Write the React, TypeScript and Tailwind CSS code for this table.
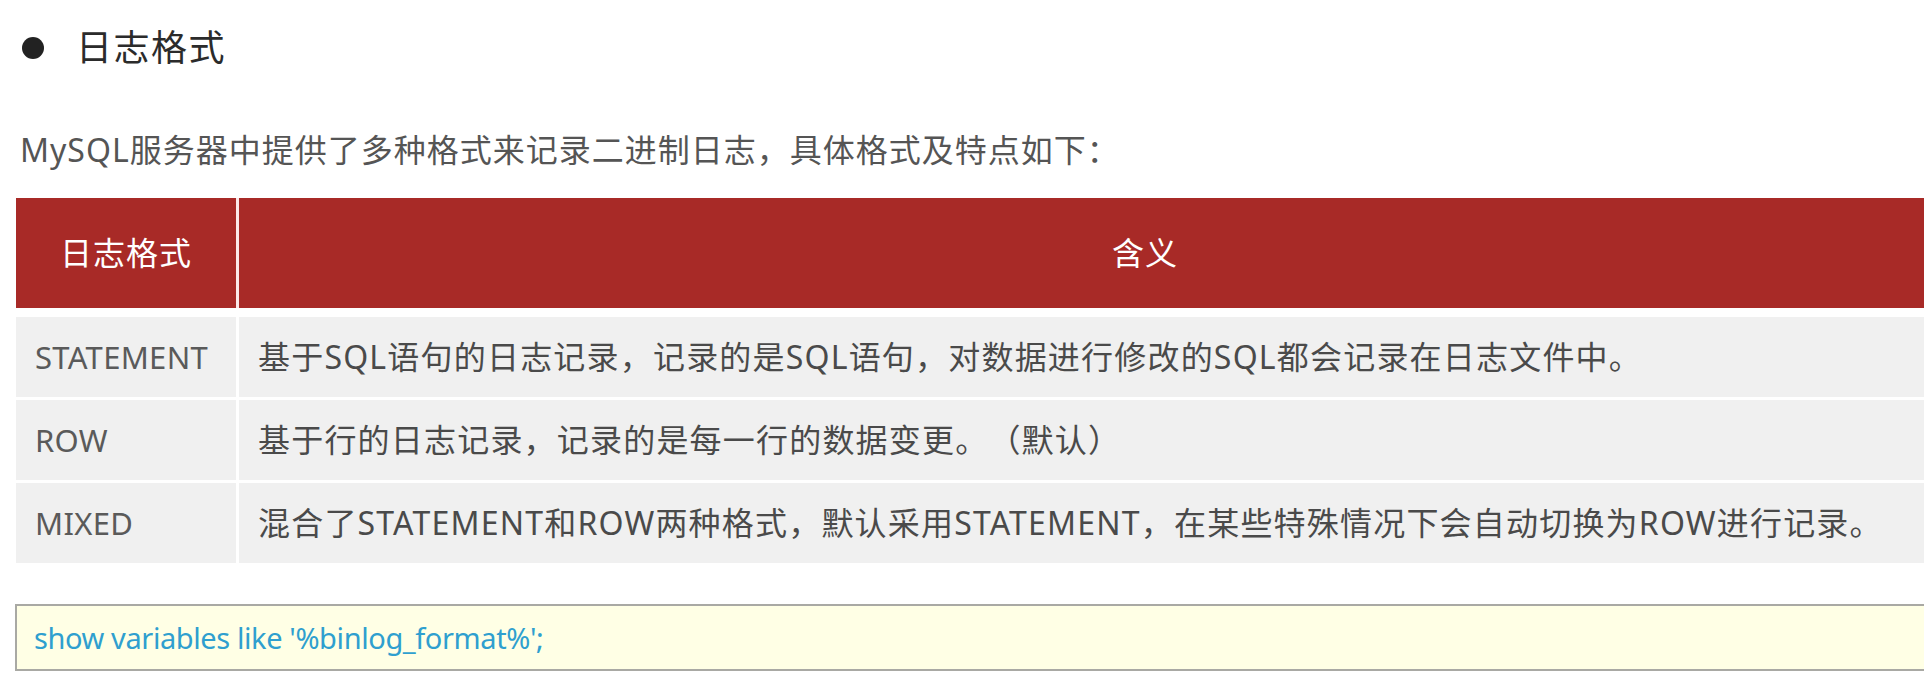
const rows = [
  {
    name: 'STATEMENT',
    desc: '基于SQL语句的日志记录，记录的是SQL语句，对数据进行修改的SQL都会记录在日志文件中。',
  },
  {
    name: 'ROW',
    desc: '基于行的日志记录，记录的是每一行的数据变更。（默认）',
  },
  {
    name: 'MIXED',
    desc: '混合了STATEMENT和ROW两种格式，默认采用STATEMENT，在某些特殊情况下会自动切换为ROW进行记录。',
  },
];

const font = "font-['Noto_Sans','Noto_Sans_CJK_SC',sans-serif]";

export default function App() {
  return (
    <div className={`w-[1924px] h-[689px] overflow-hidden bg-white [text-spacing-trim:space-all] ${font}`}>
      {/* Section title */}
      <div className="pt-[23px] pl-[22px] flex items-center h-[73px]">
        <span className="w-[22px] h-[22px] rounded-full bg-[#222]" />
        <h1 className="ml-[32px] text-[36px] leading-[50px] text-[#2b2b2b] tracking-[1.5px]">日志格式</h1>
      </div>

      <p className="mt-[54px] pl-[20px] text-[32px] leading-[46px] text-[#555] tracking-[1px]">
        MySQL服务器中提供了多种格式来记录二进制日志，具体格式及特点如下：
      </p>

      {/* Table */}
      <div className="mt-[25px] ml-[16px] w-[2035px]">
        <div className="grid grid-cols-[220px_1fr] gap-x-[3px] h-[110px] bg-[#fbe9e9]">
          <div className="bg-[#a82a27] flex items-center justify-center text-white text-[32px] tracking-[1px]">日志格式</div>
          <div className="bg-[#a82a27] flex items-center justify-center text-white text-[32px] tracking-[1px]">含义</div>
        </div>

        <div className="mt-[9px] flex flex-col gap-[3px]">
          {rows.map((row) => (
            <div key={row.name} className="grid grid-cols-[220px_1fr] gap-x-[3px] h-[80px]">
              <div className="bg-[#f0f0f0] flex items-center pl-[19px] text-[31px] text-[#5a5a5a] tracking-[0.3px]">{row.name}</div>
              <div className="bg-[#f0f0f0] flex items-center pl-[19px] text-[32px] text-[#4a4a4a] tracking-[1.2px]">{row.desc}</div>
            </div>
          ))}
        </div>
      </div>

      {/* Code block */}
      <div className="mt-[41px] ml-[15px] w-[2035px] h-[67px] border-2 border-[#a9a9a4] bg-[#ffffe5] flex items-center pl-[17px]">
        <code className="font-['Noto_Sans',sans-serif] text-[29px] text-[#2f9fcf] tracking-[-0.4px]">show variables like '%binlog_format%';</code>
      </div>
    </div>
  );
}
